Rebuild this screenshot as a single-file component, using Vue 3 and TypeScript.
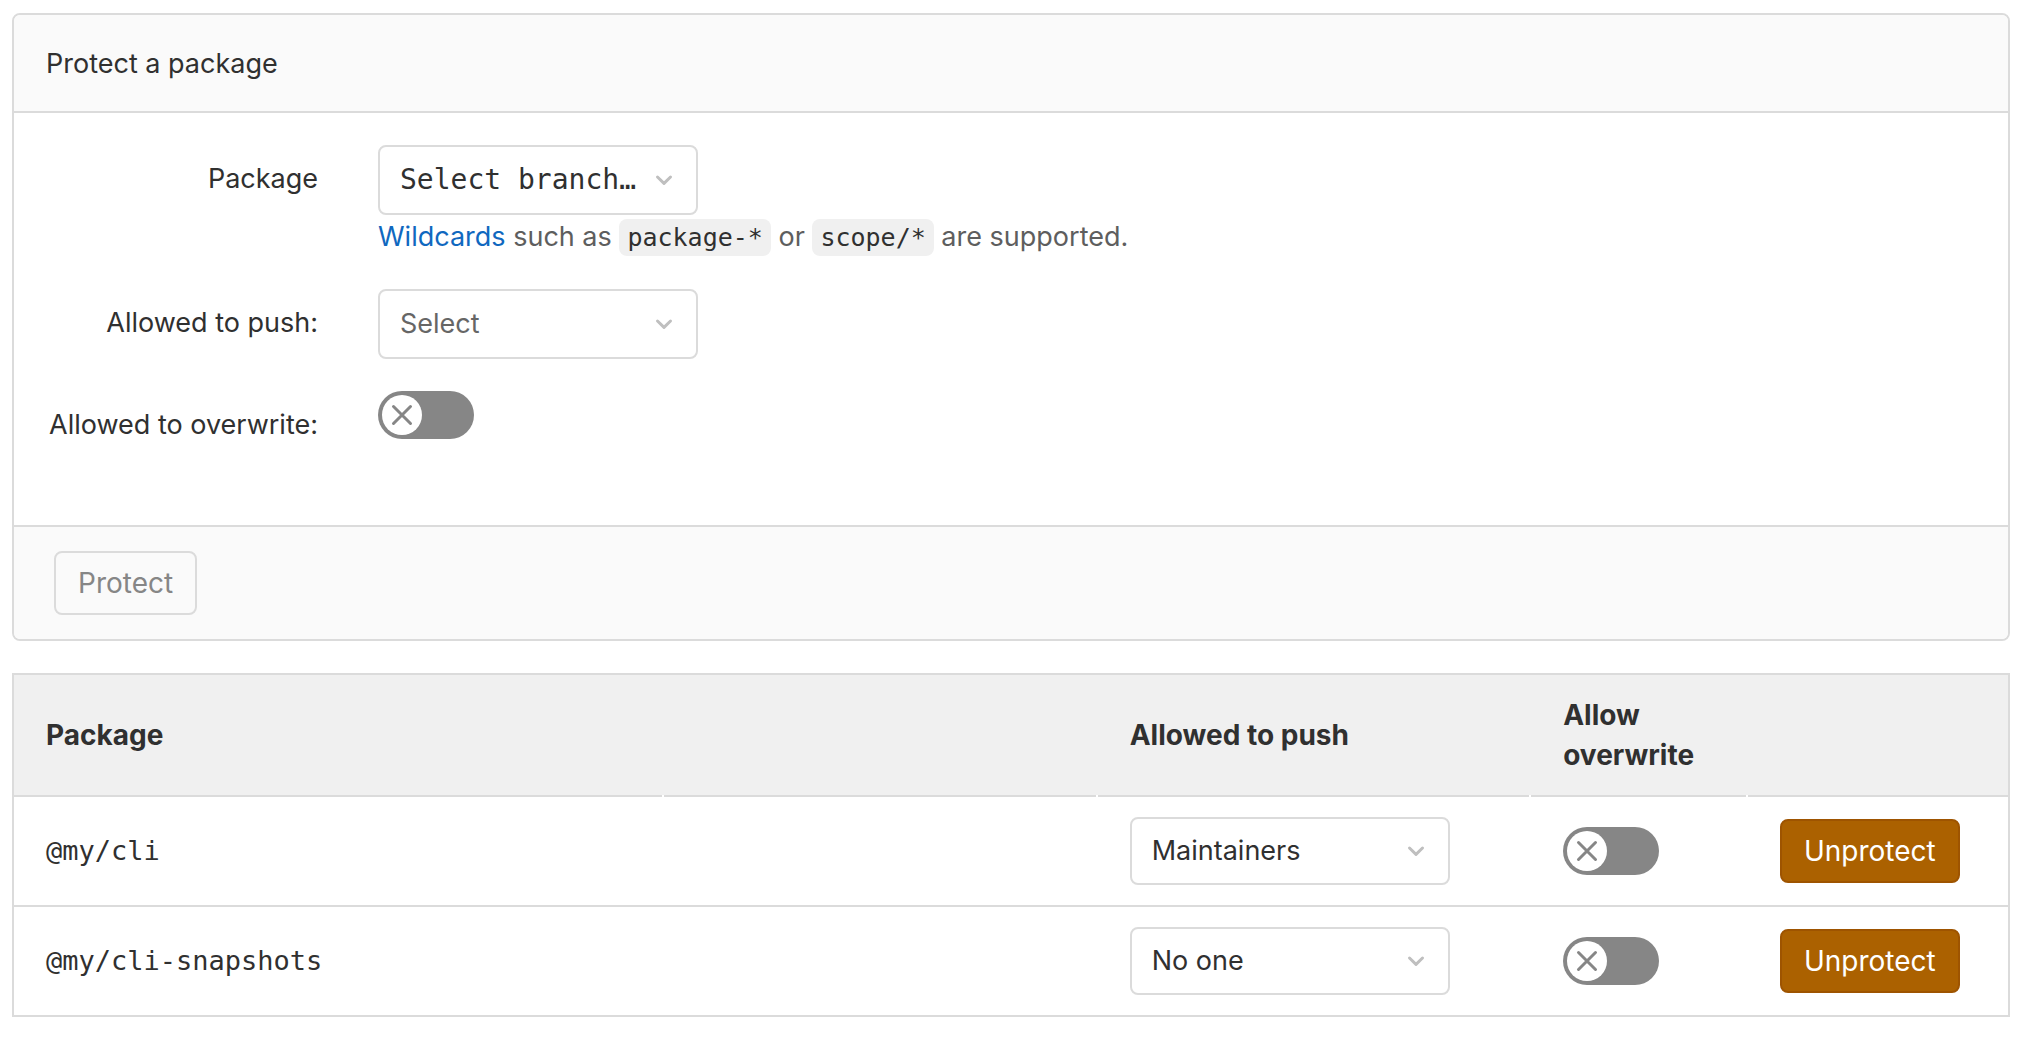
<script setup lang="ts">
import { ref } from 'vue'

interface ProtectedPackage {
  name: string
  access: string
  overwrite: boolean
}

const accessLevels: string[] = ['Maintainers', 'Developers', 'No one']

const newPackage = ref('')
const newAccess = ref('')
const newOverwrite = ref(false)

const packages = ref<ProtectedPackage[]>([
  { name: '@my/cli', access: 'Maintainers', overwrite: false },
  { name: '@my/cli-snapshots', access: 'No one', overwrite: false },
])

function unprotect(name: string): void {
  packages.value = packages.value.filter((item) => item.name !== name)
}
</script>

<template>
  <main class="page">
    <form class="card" @submit.prevent>
      <header class="card-header">Protect a package</header>

      <div class="card-body">
        <div class="form-row">
          <label class="form-label" for="new-package">Package</label>
          <div>
            <div class="select select-tall">
              <select id="new-package" v-model="newPackage" class="mono">
                <option value="">Select branch…</option>
                <option v-for="item in packages" :key="item.name">{{ item.name }}</option>
              </select>
              <svg class="chevron" viewBox="0 0 20 12" aria-hidden="true"><path d="M3.500 3 10 9.300 16.500 3" /></svg>
            </div>
            <p class="help">
              <a href="#wildcards">Wildcards</a> such as <code>package-*</code> or <code>scope/*</code> are supported.
            </p>
          </div>
        </div>

        <div class="form-row">
          <label class="form-label" for="new-access">Allowed to push:</label>
          <div class="select select-tall">
            <select id="new-access" v-model="newAccess" :class="{ placeholder: !newAccess }">
              <option value="">Select</option>
              <option v-for="level in accessLevels" :key="level">{{ level }}</option>
            </select>
            <svg class="chevron" viewBox="0 0 20 12" aria-hidden="true"><path d="M3.500 3 10 9.300 16.500 3" /></svg>
          </div>
        </div>

        <div class="form-row">
          <label class="form-label" for="new-overwrite">Allowed to overwrite:</label>
          <span class="toggle">
            <input id="new-overwrite" v-model="newOverwrite" type="checkbox" role="switch" />
            <svg class="knob" viewBox="0 0 40 40" aria-hidden="true">
              <circle cx="20" cy="20" r="20" />
              <path d="M11.500 11.500 28.500 28.500M28.500 11.500 11.500 28.500" />
            </svg>
          </span>
        </div>
      </div>

      <footer class="card-footer">
        <button class="btn" type="submit" disabled>Protect</button>
      </footer>
    </form>

    <table class="packages">
      <colgroup>
        <col class="col-name" />
        <col class="col-info" />
        <col class="col-push" />
        <col class="col-overwrite" />
        <col class="col-action" />
      </colgroup>
      <thead>
        <tr>
          <th scope="col">Package</th>
          <th></th>
          <th scope="col">Allowed to push</th>
          <th scope="col">Allow overwrite</th>
          <th></th>
        </tr>
      </thead>
      <tbody>
        <tr v-for="item in packages" :key="item.name">
          <td><span class="package-name">{{ item.name }}</span></td>
          <td></td>
          <td>
            <div class="select">
              <select v-model="item.access" :aria-label="`Allowed to push to ${item.name}`">
                <option v-for="level in accessLevels" :key="level">{{ level }}</option>
              </select>
              <svg class="chevron" viewBox="0 0 20 12" aria-hidden="true"><path d="M3.500 3 10 9.300 16.500 3" /></svg>
            </div>
          </td>
          <td>
            <span class="toggle">
              <input v-model="item.overwrite" type="checkbox" role="switch" :aria-label="`Allow overwrite of ${item.name}`" />
              <svg class="knob" viewBox="0 0 40 40" aria-hidden="true">
                <circle cx="20" cy="20" r="20" />
                <path d="M11.500 11.500 28.500 28.500M28.500 11.500 11.500 28.500" />
              </svg>
            </span>
          </td>
          <td>
            <button class="btn btn-warning" type="button" @click="unprotect(item.name)">Unprotect</button>
          </td>
        </tr>
      </tbody>
    </table>
  </main>
</template>

<style>
body {
  margin: 0;
  background: #fff;
}
</style>

<style scoped>
.page {
  display: flex;
  flex-direction: column;
  gap: 32px;
  padding: 13px 18px 20px 12px;
  color: #303030;
  font-family: Inter, "Liberation Sans", sans-serif;
  font-size: 27px;
  line-height: 40px;
}

.page *,
.page {
  box-sizing: border-box;
}

.card {
  overflow: hidden;
  border: 2px solid #dbdbdb;
  border-radius: 8px;
}

.card-header {
  padding: 29px 32px 27px;
  border-bottom: 2px solid #dbdbdb;
  background: #fafafa;
}

.card-body {
  display: flex;
  flex-direction: column;
  gap: 32px;
  padding: 32px 32px 64px;
}

.form-row {
  display: grid;
  grid-template-columns: 272px 1fr;
  gap: 60px;
  min-height: 70px;
}

.form-label {
  padding-top: 14px;
  text-align: right;
  white-space: nowrap;
}

.select {
  position: relative;
  width: 320px;
  height: 68px;
}

.select-tall {
  height: 70px;
}

.select select {
  display: block;
  width: 100%;
  height: 100%;
  margin: 0;
  padding: 0 52px 0 20px;
  appearance: none;
  border: 2px solid #dbdbdb;
  border-radius: 8px;
  background: #fff;
  color: #303030;
  font: inherit;
}

.select select.mono {
  font-family: "DejaVu Sans Mono", monospace;
  font-size: 28px;
}

.select select.placeholder {
  color: #666;
}

.chevron {
  position: absolute;
  top: 50%;
  right: 24px;
  width: 20px;
  height: 12px;
  margin-top: -6px;
  fill: none;
  stroke: #bfbfbf;
  stroke-width: 3;
  stroke-linecap: round;
  stroke-linejoin: round;
  pointer-events: none;
}

.help {
  margin: 2px 0 0;
  color: #5e5e5e;
}

.help a {
  color: #1068bf;
  text-decoration: none;
}

.help code {
  padding: 4px 8px;
  border-radius: 8px;
  background: #f0f0f0;
  color: #303030;
  font-family: "DejaVu Sans Mono", monospace;
  font-size: 25px;
  line-height: 1;
}

.toggle {
  position: relative;
  display: block;
  width: 96px;
  height: 48px;
}

.toggle input {
  display: block;
  width: 100%;
  height: 100%;
  margin: 0;
  appearance: none;
  border-radius: 24px;
  background: #868686;
}

.toggle input:checked {
  background: #1068bf;
}

.knob {
  position: absolute;
  top: 4px;
  left: 4px;
  width: 40px;
  height: 40px;
  fill: #fff;
  stroke-linecap: round;
  pointer-events: none;
}

.knob path {
  stroke: #868686;
  stroke-width: 3;
}

.toggle input:checked + .knob {
  left: 52px;
}

.card-footer {
  display: flex;
  padding: 24px 40px;
  border-top: 2px solid #dbdbdb;
  background: #fafafa;
}

.btn {
  display: block;
  height: 64px;
  padding: 0 22px;
  border: 2px solid #dbdbdb;
  border-radius: 8px;
  background: #fafafa;
  color: #868686;
  font: inherit;
  font-size: 28px;
}

.btn-warning {
  border-color: #9e5400;
  background: #ab6100;
  color: #fff;
}

.packages {
  width: 100%;
  table-layout: fixed;
  border: 2px solid #dbdbdb;
  border-spacing: 0;
}

.col-name {
  width: 30%;
}

.col-info,
.col-push {
  width: 20%;
}

.col-overwrite {
  width: 10%;
}

.col-action {
  width: 12%;
}

.packages th {
  padding: 20px 32px 22px;
  /* rule along the bottom edge, broken between columns */
  background:
    linear-gradient(#dbdbdb, #dbdbdb) left bottom / calc(100% - 2px) 2px no-repeat,
    linear-gradient(#fff, #fff) left bottom / 100% 2px no-repeat,
    #f0f0f0;
  font-size: 28px;
  font-weight: 700;
  text-align: left;
  vertical-align: middle;
}

.packages th:last-child {
  background:
    linear-gradient(#dbdbdb, #dbdbdb) left bottom / 100% 2px no-repeat,
    #f0f0f0;
}

.packages td {
  height: 108px;
  padding: 0 32px;
  vertical-align: middle;
}

.packages tbody tr + tr td {
  height: 110px;
  border-top: 2px solid #dbdbdb;
}

.package-name {
  font-family: "DejaVu Sans Mono", monospace;
  font-size: 27px;
}
</style>
